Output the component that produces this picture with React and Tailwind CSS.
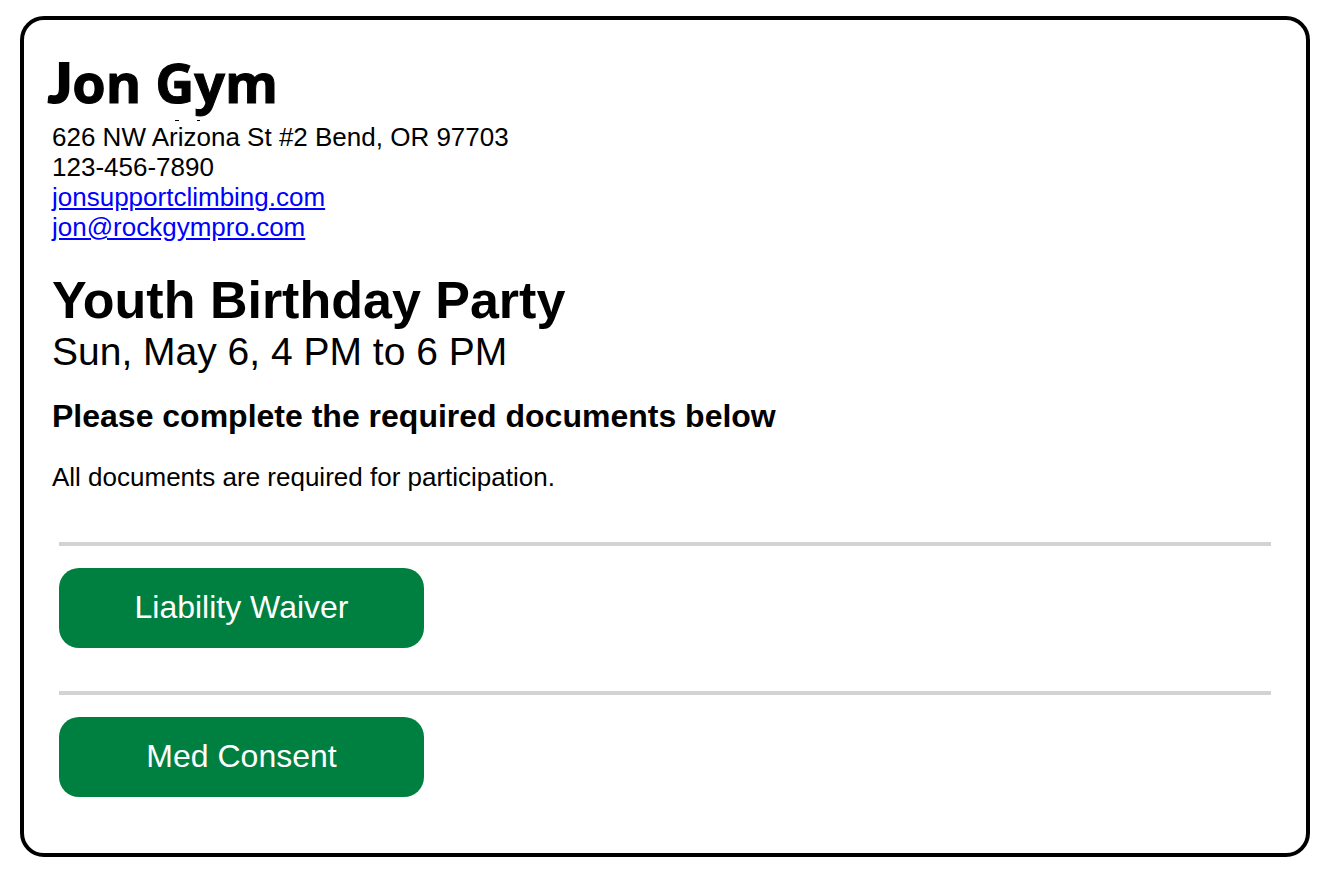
const documents = [
  { name: "Liability Waiver", href: "#liability-waiver" },
  { name: "Med Consent", href: "#med-consent" },
];

const GymHeader = () => (
  <header>
    <div className="-ml-1 h-16 font-['Open_Sans',sans-serif] text-[54px] leading-[60px] font-bold [-webkit-text-stroke:1px_black]">
      <span className="font-['Lato',sans-serif] text-[56px] font-black [-webkit-text-stroke:2px_black]">J</span>on Gym
    </div>
    {/* Logo tagline marks */}
    <svg className="ml-[123px] h-[6px] w-[26px]" viewBox="0 0 26 6" aria-hidden="true">
      <path d="M0 4h4v1h-4zM22 4h3v1h-3z" />
    </svg>
    <address className="text-[26px] leading-[30px] not-italic">
      <div>626 NW Arizona St #2 Bend, OR 97703</div>
      <div>123-456-7890</div>
      <div>
        <a href="#website" className="text-[#0000ff] underline">
          jonsupportclimbing.com
        </a>
      </div>
      <div>
        <a href="#email" className="text-[#0000ff] underline">
          jon@rockgympro.com
        </a>
      </div>
    </address>
  </header>
);

const DocumentRow = ({ name, href }) => (
  <li className="border-t-4 border-[#d3d3d3] pt-[22px] pb-[43px]">
    <a
      href={href}
      className="flex h-20 w-[365px] items-center justify-center rounded-[20px] bg-[#008040] pb-0.5 text-[32px] leading-9 text-white"
    >
      {name}
    </a>
  </li>
);

const App = () => {
  return (
    <main className="my-4 mr-[22px] ml-5 rounded-3xl border-4 border-black bg-white px-7 pt-8 pb-[13px] font-['Liberation_Sans',Arial,sans-serif] text-black">
      <GymHeader />

      <h1 className="mt-7 text-[52px] leading-[60px] font-bold">Youth Birthday Party</h1>
      <p className="text-[39px] leading-[44px]">Sun, May 6, 4 PM to 6 PM</p>

      <h2 className="mt-6 text-[32px] leading-9 font-bold">
        Please complete the required documents below
      </h2>
      <p className="mt-7 text-[26px] leading-[30px]">All documents are required for participation.</p>

      {/* Documents */}
      <ul className="mt-[50px] mr-[7px] ml-[7px]">
        {documents.map((doc) => (
          <DocumentRow key={doc.name} {...doc} />
        ))}
      </ul>
    </main>
  );
};

export default App;
